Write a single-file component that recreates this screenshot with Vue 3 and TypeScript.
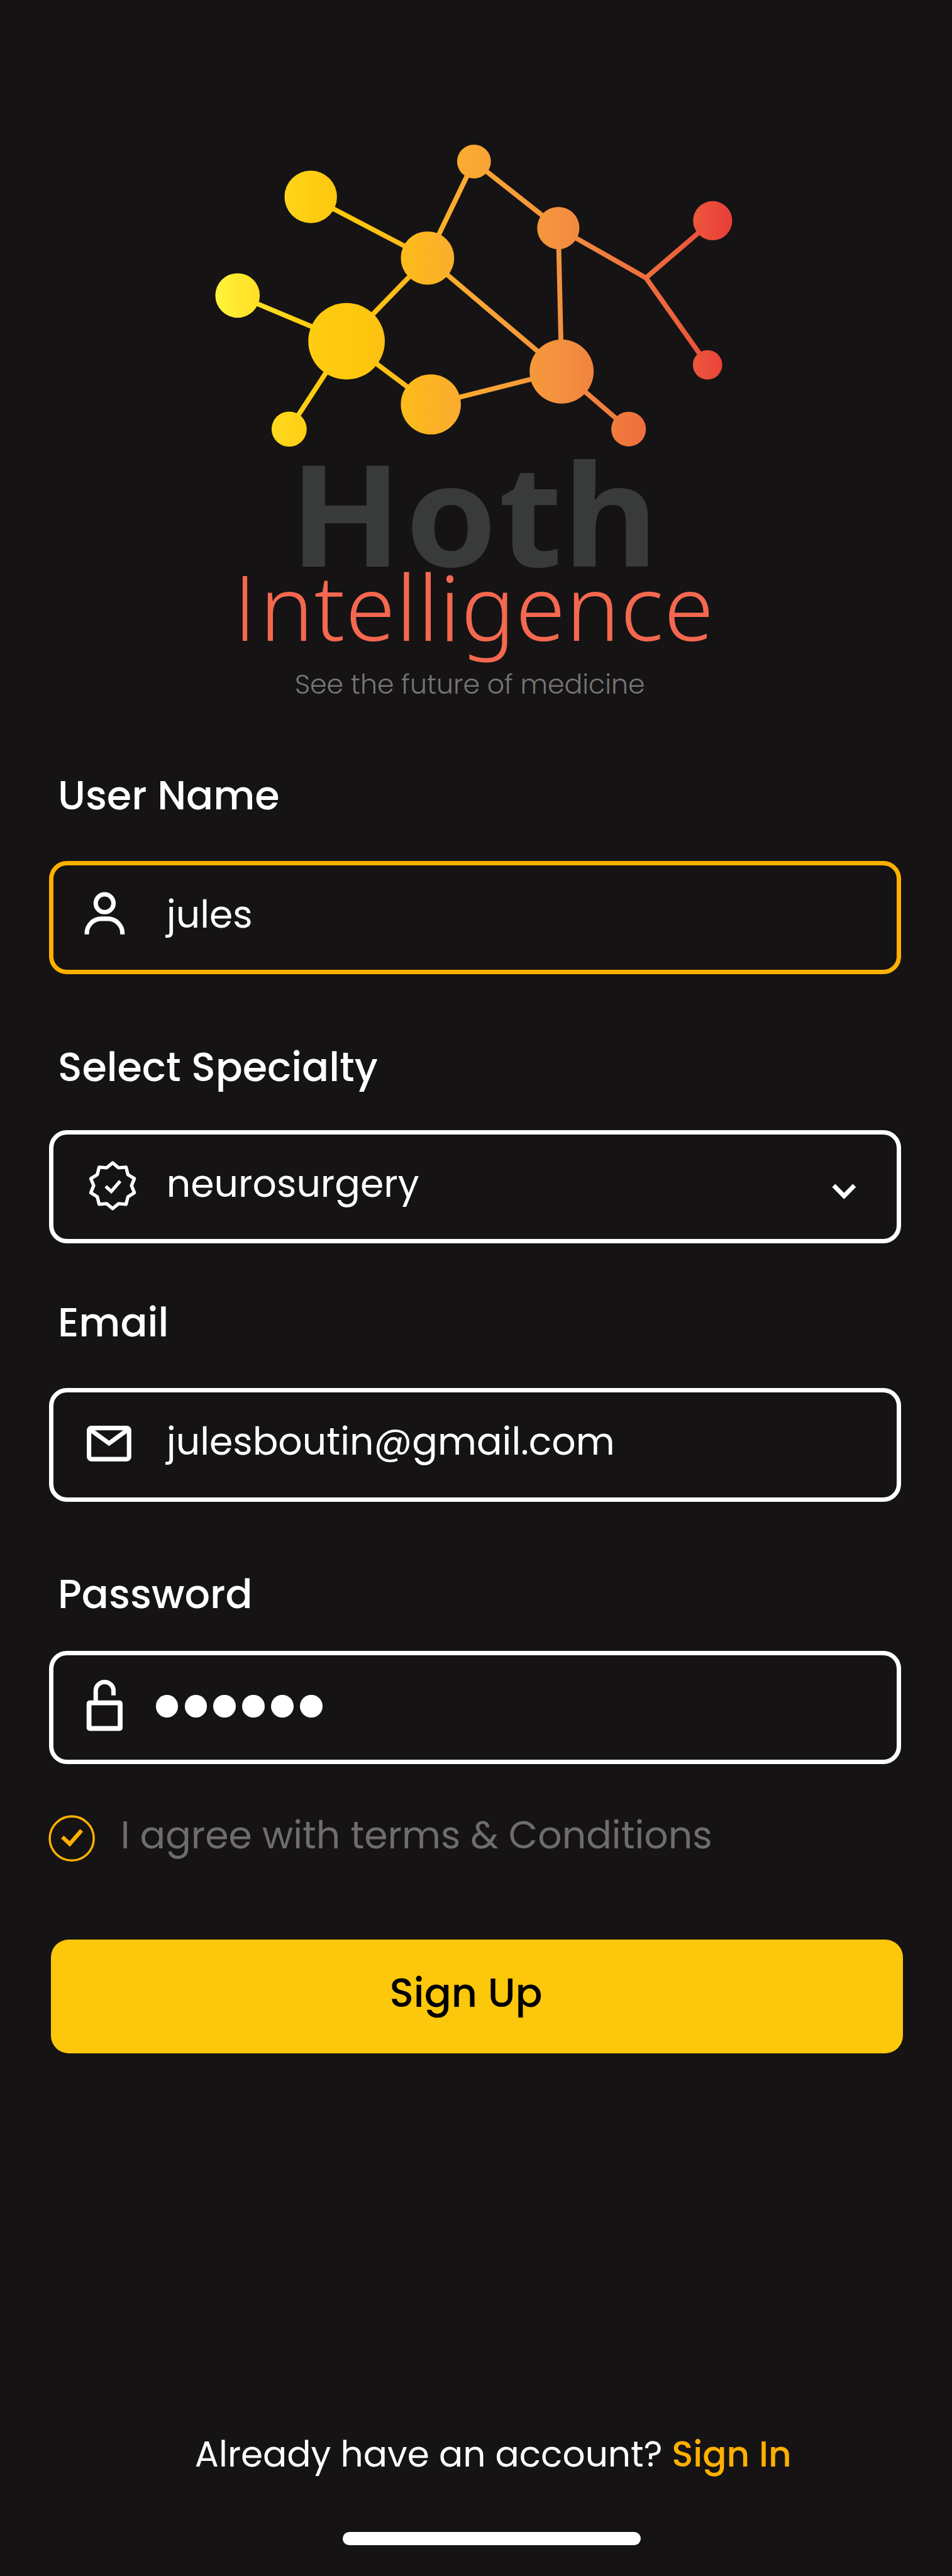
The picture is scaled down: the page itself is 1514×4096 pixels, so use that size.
<script setup lang="ts">
interface Dot { x: number; y: number; r: number }

const dots: Record<string, Dot> = {
  a: { x: 139.7, y: 88.5, r: 11.8 },
  b: { x: 192.2, y: 116, r: 12 },
  c: { x: 106.8, y: 132.8, r: 10 },
  d: { x: 155.8, y: 153.4, r: 17.2 },
  e: { x: 193.7, y: 181.8, r: 13.5 },
  f: { x: 130, y: 192.9, r: 7.9 },
  g: { x: 213.1, y: 72.6, r: 7.6 },
  h: { x: 251, y: 102.5, r: 9.5 },
  i: { x: 252.5, y: 167, r: 14.4 },
  j: { x: 282.6, y: 192.9, r: 7.8 },
  k: { x: 320.4, y: 99.2, r: 8.8 },
  l: { x: 318.1, y: 164, r: 6.6 },
  fork: { x: 290.4, y: 124.9, r: 1.1 },
}

const edges = ['ab', 'gb', 'gh', 'bd', 'bi', 'cd', 'df', 'de', 'ei', 'hi', 'ij']
  .map((pair) => [dots[pair[0]], dots[pair[1]]])
  .concat([
    [dots.h, dots.fork],
    [dots.fork, dots.k],
    [dots.fork, dots.l],
  ])

// Ten-pointed verification seal
const seal = Array.from({ length: 20 }, (_, n) => {
  const radius = n % 2 ? 8.5 : 10.3
  const angle = (n * Math.PI) / 10
  return `${(50.6 + radius * Math.sin(angle)).toFixed(2)},${(25 - radius * Math.cos(angle)).toFixed(2)}`
}).join(' ')
</script>

<template>
  <main class="screen">
    <svg class="logo" viewBox="0 0 428 330" role="img" aria-label="Hoth Intelligence">
      <defs>
        <linearGradient id="heat" gradientUnits="userSpaceOnUse" x1="97" y1="0" x2="329" y2="0">
          <stop offset="0" stop-color="#fff33b" />
          <stop offset="0.06" stop-color="#ffe42b" />
          <stop offset="0.13" stop-color="#ffd51a" />
          <stop offset="0.2" stop-color="#fecb10" />
          <stop offset="0.28" stop-color="#fdc70c" />
          <stop offset="0.49" stop-color="#fba932" />
          <stop offset="0.67" stop-color="#f3903f" />
          <stop offset="0.89" stop-color="#ed623c" />
          <stop offset="1" stop-color="#e93e3a" />
        </linearGradient>
      </defs>
      <g stroke="url(#heat)" stroke-width="2.2">
        <line v-for="(e, n) in edges" :key="n" :x1="e[0].x" :y1="e[0].y" :x2="e[1].x" :y2="e[1].y" />
      </g>
      <g fill="url(#heat)">
        <circle v-for="(d, name) in dots" :key="name" :cx="d.x" :cy="d.y" :r="d.r" />
      </g>
      <text class="hoth" transform="scale(1.04 1)" x="125.1 175.3 215.5 243" y="254.7">Hoth</text>
      <text class="intel" y="288"><tspan class="cap" x="105">I</tspan><tspan x="116.8" textLength="204.1" lengthAdjust="spacing">ntelligence</tspan></text>
      <text class="tagline" x="132.5" y="311.9">See the future of medicine</text>
    </svg>

    <form class="form" @submit.prevent>
      <section class="group">
        <label class="label">User Name</label>
        <div class="field active">
          <svg class="icon" viewBox="24 2 50.9 47">
            <circle cx="47" cy="19" r="4" />
            <path d="M39 33v-.5a6.5 6.5 0 0 1 6.5-6.5h3a6.5 6.5 0 0 1 6.5 6.5v.5" />
          </svg>
          <span class="value">jules</span>
        </div>
      </section>

      <section class="group specialty">
        <label class="label">Select Specialty</label>
        <div class="field">
          <svg class="icon" viewBox="24 2 50.9 47">
            <polygon :points="seal" stroke-width="1.5" stroke-linejoin="round" />
            <path d="M47.500 25.300l2.500 2.300 4-4.700" stroke-width="1.5" />
          </svg>
          <span class="value">neurosurgery</span>
          <svg class="chevron" viewBox="372 2 16 47">
            <path d="M374.800 24.900l4.650 4.700 4.650-4.700" />
          </svg>
        </div>
      </section>

      <section class="group email">
        <label class="label">Email</label>
        <div class="field">
          <svg class="icon" viewBox="24 2 50.9 47">
            <rect x="40" y="18" width="18" height="14" rx="1" />
            <path d="M40.600 18.800l8.400 6.100 8.400-6.100" />
          </svg>
          <span class="value">julesboutin@gmail.com</span>
        </div>
      </section>

      <section class="group password">
        <label class="label">Password</label>
        <div class="field">
          <svg class="icon lock" viewBox="24 2 46 47">
            <rect x="40" y="23.4" width="14" height="11.5" rx="0.3" stroke-width="2.2" />
            <path d="M43 23V18a4 4 0 0 1 8 0v2" />
          </svg>
          <span class="mask"><i v-for="n in 6" :key="n" /></span>
        </div>
      </section>

      <div class="terms">
        <svg class="check" viewBox="21.700 815.900 21 21">
          <circle cx="32.2" cy="826.4" r="9.9" />
          <path d="M28 825.800l3.300 3.100 5.300-6.100" />
        </svg>
        <span>I agree with terms &amp; Conditions</span>
      </div>

      <button class="submit" type="submit">Sign Up</button>
    </form>

    <footer class="footer">
      <span>Already have an account?</span>
      <a class="signin">Sign In</a>
    </footer>
    <div class="home-bar" />
  </main>
</template>

<style>
body {
  background: #151314;
}
</style>

<style scoped>
.screen {
  --u: calc(100vw / 428);
  display: flex;
  flex-direction: column;
  box-sizing: border-box;
  width: 100%;
  height: calc(1158 * var(--u));
  overflow: hidden;
  background: #151314;
  color: #fff;
  font-family: Poppins, Inter, sans-serif;
  white-space: nowrap;
}
.logo {
  display: block;
  flex: none;
  width: 100%;
  height: calc(330 * var(--u));
}
.hoth {
  font: 730 63.6px "Open Sans", "Noto Sans", sans-serif;
  fill: #393b3a;
}
.intel {
  font: 300 40.5px "Noto Sans", "Open Sans", sans-serif;
  fill: #f4684f;
}
.intel .cap {
  font-family: "Open Sans", sans-serif;
}
.tagline {
  font-size: 12.05px;
  font-weight: 300;
  fill: #777576;
}
.form {
  display: flex;
  flex-direction: column;
  padding: calc(14.6 * var(--u)) calc(23 * var(--u)) 0 calc(22 * var(--u));
}
.group {
  display: flex;
  flex-direction: column;
  gap: calc(16.4 * var(--u));
}
.group.specialty {
  margin-top: calc(28.6 * var(--u));
  gap: calc(15.4 * var(--u));
}
.group.email {
  margin-top: calc(22.6 * var(--u));
  gap: calc(16.4 * var(--u));
}
.group.password {
  margin-top: calc(28.6 * var(--u));
  gap: calc(12.4 * var(--u));
}
.label {
  padding-left: calc(4 * var(--u));
  height: calc(26 * var(--u));
  line-height: calc(26 * var(--u));
  font-size: calc(18 * var(--u));
  font-weight: 500;
}
.field {
  display: flex;
  align-items: center;
  box-sizing: border-box;
  height: calc(51 * var(--u));
  border: calc(2 * var(--u)) solid #fff;
  border-radius: calc(8 * var(--u));
}
.field.active {
  border-color: #ffb000;
}
.icon,
.chevron {
  flex: none;
  height: calc(47 * var(--u));
  fill: none;
  stroke: currentColor;
  stroke-width: 2;
}
.icon {
  width: calc(50.9 * var(--u));
}
.icon.lock {
  width: calc(46 * var(--u));
}
.chevron {
  width: calc(16 * var(--u));
  margin-left: auto;
  margin-right: calc(15 * var(--u));
}
.value {
  padding-bottom: calc(2.9 * var(--u));
  font-size: calc(17 * var(--u));
}
.mask {
  display: flex;
  gap: calc(3 * var(--u));
  padding-bottom: calc(1 * var(--u));
}
.mask i {
  width: calc(10 * var(--u));
  height: calc(10 * var(--u));
  border-radius: 50%;
  background: #fff;
}
.terms {
  display: flex;
  align-items: center;
  gap: calc(11.5 * var(--u));
  height: calc(21 * var(--u));
  margin-top: calc(22.9 * var(--u));
  line-height: calc(21 * var(--u));
  color: #6e6c6d;
  font-size: calc(17 * var(--u));
}
.terms span {
  padding-bottom: calc(2.7 * var(--u));
}
.check {
  flex: none;
  width: calc(21 * var(--u));
  height: calc(21 * var(--u));
  margin-left: calc(-0.3 * var(--u));
  fill: none;
  stroke: #ffb000;
}
.check path {
  stroke-width: 1.8;
}
.submit {
  box-sizing: border-box;
  width: calc(383 * var(--u));
  height: calc(51 * var(--u));
  margin: calc(35.1 * var(--u)) 0 0 calc(1 * var(--u));
  padding: 0 calc(10 * var(--u)) calc(3.6 * var(--u)) 0;
  border: 0;
  border-radius: calc(8 * var(--u));
  background: #fdc70c;
  color: #000;
  font-family: inherit;
  font-size: calc(18 * var(--u));
  font-weight: 500;
}
.footer {
  display: flex;
  gap: calc(4.2 * var(--u));
  margin-top: auto;
  padding-left: calc(87.6 * var(--u));
  line-height: calc(24 * var(--u));
  font-size: calc(16 * var(--u));
}
.signin {
  color: #ffb000;
  font-weight: 500;
}
.home-bar {
  flex: none;
  width: calc(134 * var(--u));
  height: calc(6 * var(--u));
  margin: calc(22.6 * var(--u)) 0 calc(14 * var(--u)) calc(154 * var(--u));
  border-radius: calc(3 * var(--u));
  background: #fff;
}
</style>
